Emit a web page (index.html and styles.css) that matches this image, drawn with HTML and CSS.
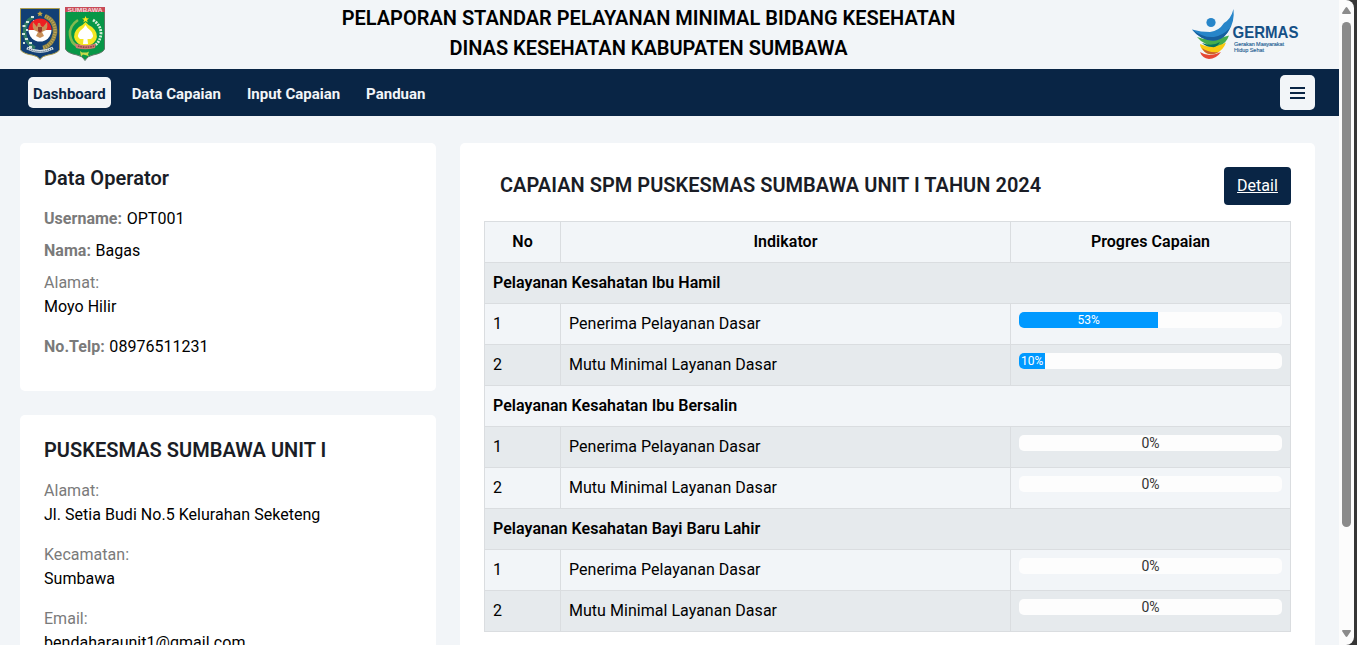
FILE: index.html
```html
<!DOCTYPE html>
<html lang="id">
<head>
<meta charset="utf-8">
<title>Pelaporan SPM Bidang Kesehatan</title>
<link rel="stylesheet" href="styles.css">
</head>
<body>
<div class="window">
<div class="page">
  <header class="header">
    <div class="emblems">
      <svg class="emblem" width="40" height="52" viewBox="0 0 40 52">
        <path d="M.5 .5H39.5V42Q36 46 28 47Q22 48 20 51.5Q18 48 12 47Q4 46 .5 42Z" fill="#123f75" stroke="#a99b4c"/>
        <path d="M20 3l.9 1.800 2 .2-1.500 1.300.5 2L20 7.300l-1.900 1 .5-2L17.100 5l2-.2z" fill="#c9a940"/>
        <path d="M13 9Q4 14 4.500 25Q6 36 15 40" fill="none" stroke="#2f7a63" stroke-width="3.500"/>
        <path d="M11 9h3M6 14h3M2.500 18h3M6 22h2M2 26h3M5 31h3M3 35h2M9 35h3M9 39h3M13 13h2" stroke="#d5e6de" stroke-width="2"/>
        <path d="M25 8Q36 13 35 25Q33 37 23 40" fill="none" stroke="#8d8247" stroke-width="4.500"/>
        <path d="M25 8Q36 13 35 25Q33 37 23 40" fill="none" stroke="#c4aa55" stroke-width="3" stroke-dasharray="1 1.500"/>
        <path d="M8.500 22a11.500 11.500 0 0 1 23 0z" fill="#ed1f22"/>
        <path d="M8.500 22a11.500 11.500 0 0 0 23 0z" fill="#fff"/>
        <path d="M13 14q-1 5 1 8l4 2-2 4 4 2 4-2-2-4 4-2q2-3 1-8l-4 5-2-1-1-3-2 0-1 4z" fill="#c99058"/>
        <path d="M18 19h4v4l-2 2-2-2z" fill="#963c2c"/>
        <path d="M7 40Q20 47 33 40" fill="none" stroke="#dfe6e8" stroke-width="3"/>
        <path d="M8 40.500Q20 47 32 40.500" fill="none" stroke="#40607f" stroke-width="1.500" stroke-dasharray="1 1"/>
      </svg>
      <svg class="emblem" width="40" height="54" viewBox="0 0 40 54">
        <path d="M.5 .5H39.500V42Q38 46 28 48Q22 49 20 53.500Q18 49 12 48Q2 46 .5 42Z" fill="#079747" stroke="#5f7767"/>
        <path d="M0 0H40V5H0z" fill="#c84b58"/>
        <text x="20" y="4.600" class="emblem-name" textLength="35" lengthAdjust="spacingAndGlyphs">SUMBAWA</text>
        <path d="M13 13Q4 19 5 28Q6 36 12 39" fill="none" stroke="#84ba50" stroke-width="2.600"/>
        <path d="M28 13Q36 18 36 27Q35 35 30 38" fill="none" stroke="#d8edda" stroke-width="2.800" stroke-dasharray="2 1"/>
        <path d="M20.500 9l1 2.300 2.500.1-2 1.500.8 2.500-2.300-1.400-2.200 1.400.8-2.500-2-1.500 2.500-.1z" fill="#ffe51a"/>
        <path d="M20.500 15Q23 18 27 20Q34 26 31 33Q27 39 20.500 39Q14 39 10 33Q7 26 14 20Q18 18 20.500 15z" fill="#f4e622"/>
        <path d="M20.500 18Q22 21 26 24Q30 29 26 32L22.500 32L23 37H18L18.500 32L15 32Q11 29 15 24Q19 21 20.500 18z" fill="#fff"/>
        <path d="M10 36.500Q20 40 31 36.500L30 41Q20 43.500 11 41z" fill="#d07870"/>
        <path d="M13 39Q20 41.500 29 39" fill="none" stroke="#793c38" stroke-width="1.200" stroke-dasharray="1.500 1"/>
        <path d="M15 44l2 1.500 5 0 2-1-1 3 1 2-2-1-4-1-2 2z" fill="#c7d94b"/>
      </svg>
    </div>
    <h1 class="title">PELAPORAN STANDAR PELAYANAN MINIMAL BIDANG KESEHATAN<br>DINAS KESEHATAN KABUPATEN SUMBAWA</h1>
    <svg class="germas" width="108" height="52" viewBox="0 0 108 52">
      <path d="M5 28Q18 33 37 26.500Q34 35 27 37Q20 39 14 35Q9 33 5 28z" fill="#45ad4d"/>
      <path d="M8 35Q20 41 34 33.500Q31 42 24 44Q16 47 12 42Q8 39 8 35z" fill="#fac90f"/>
      <path d="M10 34Q20 38 28 33Q25 39 20 38Q14 38 10 34z" fill="#08725d"/>
      <path d="M8 43Q17 49 29 43Q24 50 17 50Q10 49 8 43z" fill="#e64734"/>
      <path d="M10 39Q16 44 27 43Q22 46 17 45Q12 44 10 39z" fill="#c9622b"/>
      <circle cx="19" cy="13.500" r="4.600" fill="#2785c9"/>
      <path d="M41.500 0Q43 13 36 23Q30 32 19 31.500Q8 30 0 20.500Q9 23 18 23Q27 22 32 14Q39 10 41.500 0z" fill="#2785c9"/>
      <path d="M0 20.500Q11 29 22 28Q30 27 38 19Q33 30 24 31.500Q10 33 0 20.500z" fill="#175e9d"/>
      <text x="40.500" y="29" class="germas-name" textLength="66" lengthAdjust="spacingAndGlyphs">GERMAS</text>
      <text x="42" y="37" class="germas-sub" textLength="50">Gerakan Masyarakat</text>
      <text x="42" y="42.500" class="germas-sub" textLength="30">Hidup Sehat</text>
    </svg>
  </header>

  <nav class="nav">
    <a class="nav-link active">Dashboard</a>
    <a class="nav-link">Data Capaian</a>
    <a class="nav-link">Input Capaian</a>
    <a class="nav-link">Panduan</a>
    <button class="menu-button" aria-label="Menu"><svg width="15" height="12" viewBox="0 0 15 12"><path d="M0 1h15M0 6h15M0 11h15" stroke="#092545" stroke-width="2"/></svg></button>
  </nav>

  <main class="content">
    <aside class="side">
      <section class="card operator">
        <h2 class="card-title">Data Operator</h2>
        <p class="line"><b class="label">Username:</b> OPT001</p>
        <p class="line"><b class="label">Nama:</b> Bagas</p>
        <p class="field"><span class="label">Alamat:</span><br>Moyo Hilir</p>
        <p class="field"><b class="label">No.Telp:</b> 08976511231</p>
      </section>
      <section class="card">
        <h2 class="card-title">PUSKESMAS SUMBAWA UNIT I</h2>
        <p class="field"><span class="label">Alamat:</span><br>Jl. Setia Budi No.5 Kelurahan Seketeng</p>
        <p class="field"><span class="label">Kecamatan:</span><br>Sumbawa</p>
        <p class="field"><span class="label">Email:</span><br>bendaharaunit1@gmail.com</p>
      </section>
    </aside>
    <section class="card report">
      <div class="report-head">
        <h2 class="report-title">CAPAIAN SPM PUSKESMAS SUMBAWA UNIT I TAHUN 2024</h2>
        <a class="detail">Detail</a>
      </div>
      <table class="table">
        <colgroup><col class="col-no"><col class="col-name"><col class="col-progress"></colgroup>
        <thead><tr><th>No</th><th>Indikator</th><th>Progres Capaian</th></tr></thead>
        <tbody>
          <tr><td colspan="3" class="group">Pelayanan Kesahatan Ibu Hamil</td></tr>
          <tr><td>1</td><td>Penerima Pelayanan Dasar</td><td class="progress-cell"><div class="progress"><div class="bar" style="width:53%">53%</div></div></td></tr>
          <tr><td>2</td><td>Mutu Minimal Layanan Dasar</td><td class="progress-cell"><div class="progress"><div class="bar" style="width:10%">10%</div></div></td></tr>
          <tr><td colspan="3" class="group">Pelayanan Kesahatan Ibu Bersalin</td></tr>
          <tr><td>1</td><td>Penerima Pelayanan Dasar</td><td class="progress-cell"><div class="progress empty">0%</div></td></tr>
          <tr><td>2</td><td>Mutu Minimal Layanan Dasar</td><td class="progress-cell"><div class="progress empty">0%</div></td></tr>
          <tr><td colspan="3" class="group">Pelayanan Kesahatan Bayi Baru Lahir</td></tr>
          <tr><td>1</td><td>Penerima Pelayanan Dasar</td><td class="progress-cell"><div class="progress empty">0%</div></td></tr>
          <tr><td>2</td><td>Mutu Minimal Layanan Dasar</td><td class="progress-cell"><div class="progress empty">0%</div></td></tr>
        </tbody>
      </table>
    </section>
  </main>
</div>
<div class="scrollbar">
  <svg width="9" height="7" viewBox="0 0 9 7"><path d="M4.500 0Q5 0 5.500 .8L9 6Q9 7 8 7H1Q0 7 0 6L3.500 .8Q4 0 4.500 0z" fill="#8b8b8b"/></svg>
  <div class="thumb"></div>
  <svg class="arrow-down" width="9" height="7" viewBox="0 0 9 7"><path d="M4.500 7Q5 7 5.500 6.200L9 1Q9 0 8 0H1Q0 0 0 1L3.500 6.200Q4 7 4.500 7z" fill="#8b8b8b"/></svg>
</div>
</div>
</body>
</html>
```
FILE: styles.css
```css
* { box-sizing: border-box; }
body { margin: 0; background: #363636; font: 16px/24px Roboto, sans-serif; letter-spacing: .03px; color: #000; overflow: hidden; }
h1, h2, p { margin: 0; }
.window { display: flex; width: 1354px; height: 645px; overflow: hidden; border-radius: 0 8px 8px 0; background: #fcfcfc; }
.page { width: 1339px; height: 645px; overflow: hidden; background: #f2f5f8; }
.header { display: flex; justify-content: space-between; height: 69px; padding: 0 39px 0 20px; }
.emblems { display: flex; gap: 5px; padding-top: 7px; width: 85px; }
.emblem:first-child { margin-top: 1px; }
.emblem-name { font: bold 6px "Liberation Sans", sans-serif; fill: #f3d9dc; text-anchor: middle; }
.title { padding-top: 3px; font-size: 20px; line-height: 30px; font-weight: 600; letter-spacing: 0; text-align: center; }
.germas { margin-top: 9px; overflow: visible; }
.germas-name { font: bold 17px "Liberation Sans", sans-serif; fill: #155086; }
.germas-sub { font: 5.500px "Liberation Sans", sans-serif; fill: #286394; stroke: #286394; stroke-width: .15px; }
.nav { display: flex; align-items: center; gap: 16px; height: 47px; padding: 0 24px 0 28px; background: #092545; }
.nav-link { padding: 5px 5px 2px; line-height: 24px; font-weight: 700; font-size: 15px; letter-spacing: 0; color: #f2f5f8; border-radius: 5px; }
.nav-link.active { background: #f2f5f8; color: #092545; }
.menu-button { display: flex; align-items: center; justify-content: center; width: 35px; height: 35px; margin-left: auto; padding: 0; border: 0; border-radius: 5px; background: #f2f5f8; }
.content { display: grid; grid-template-columns: 416px 855px; gap: 24px; align-items: start; padding: 27px 24px 0 20px; }
.side { display: flex; flex-direction: column; gap: 24px; }
.card { padding: 24px; border-radius: 5px; background: #fff; }
.operator { height: 248px; }
.card-title { margin-bottom: 17px; font-size: 20px; line-height: 23px; font-weight: 600; color: #1a1d26; }
.line { margin-bottom: 8px; }
.field { margin-bottom: 16px; }
.label { color: #7a7a7a; }
b.label { margin-right: .6px; }
.report { min-height: 540px; }
.report-head { display: flex; justify-content: space-between; padding-left: 16px; margin-bottom: 16px; }
.report-title { padding-top: 6px; font-size: 20px; line-height: 24px; font-weight: 600; color: #1a1d26; }
.detail { width: 67px; height: 38px; border-radius: 4px; background: #092545; color: #fff; line-height: 38px; text-align: center; text-decoration: underline; }
.table { width: 807px; table-layout: fixed; border-collapse: collapse; background: #f2f5f8; }
.col-no { width: 76px; }
.col-name { width: 450px; }
.col-progress { width: 280px; }
.table th, .table td { height: 41px; padding: 8px; border: 1px solid #dadde0; text-align: left; }
.table th { font-weight: 600; text-align: center; }
.table tbody tr:nth-child(odd) { background: #e6eaed; }
.table .group { font-weight: 600; }
.table .progress-cell { vertical-align: top; }
.progress { height: 16px; overflow: hidden; border-radius: 5px; background: #fdfdfd; font-size: 12px; line-height: 16px; }
.bar { height: 16px; background: #0099ff; color: #fff; text-align: center; }
.empty { font-size: 14px; color: #333; text-align: center; }
.scrollbar { display: flex; flex-direction: column; align-items: center; width: 15px; height: 645px; padding: 7px 0 8px; }
.thumb { width: 9px; height: 505px; margin-top: 8px; border-radius: 5px; background: #8b8b8b; }
.arrow-down { margin-top: auto; }
```
